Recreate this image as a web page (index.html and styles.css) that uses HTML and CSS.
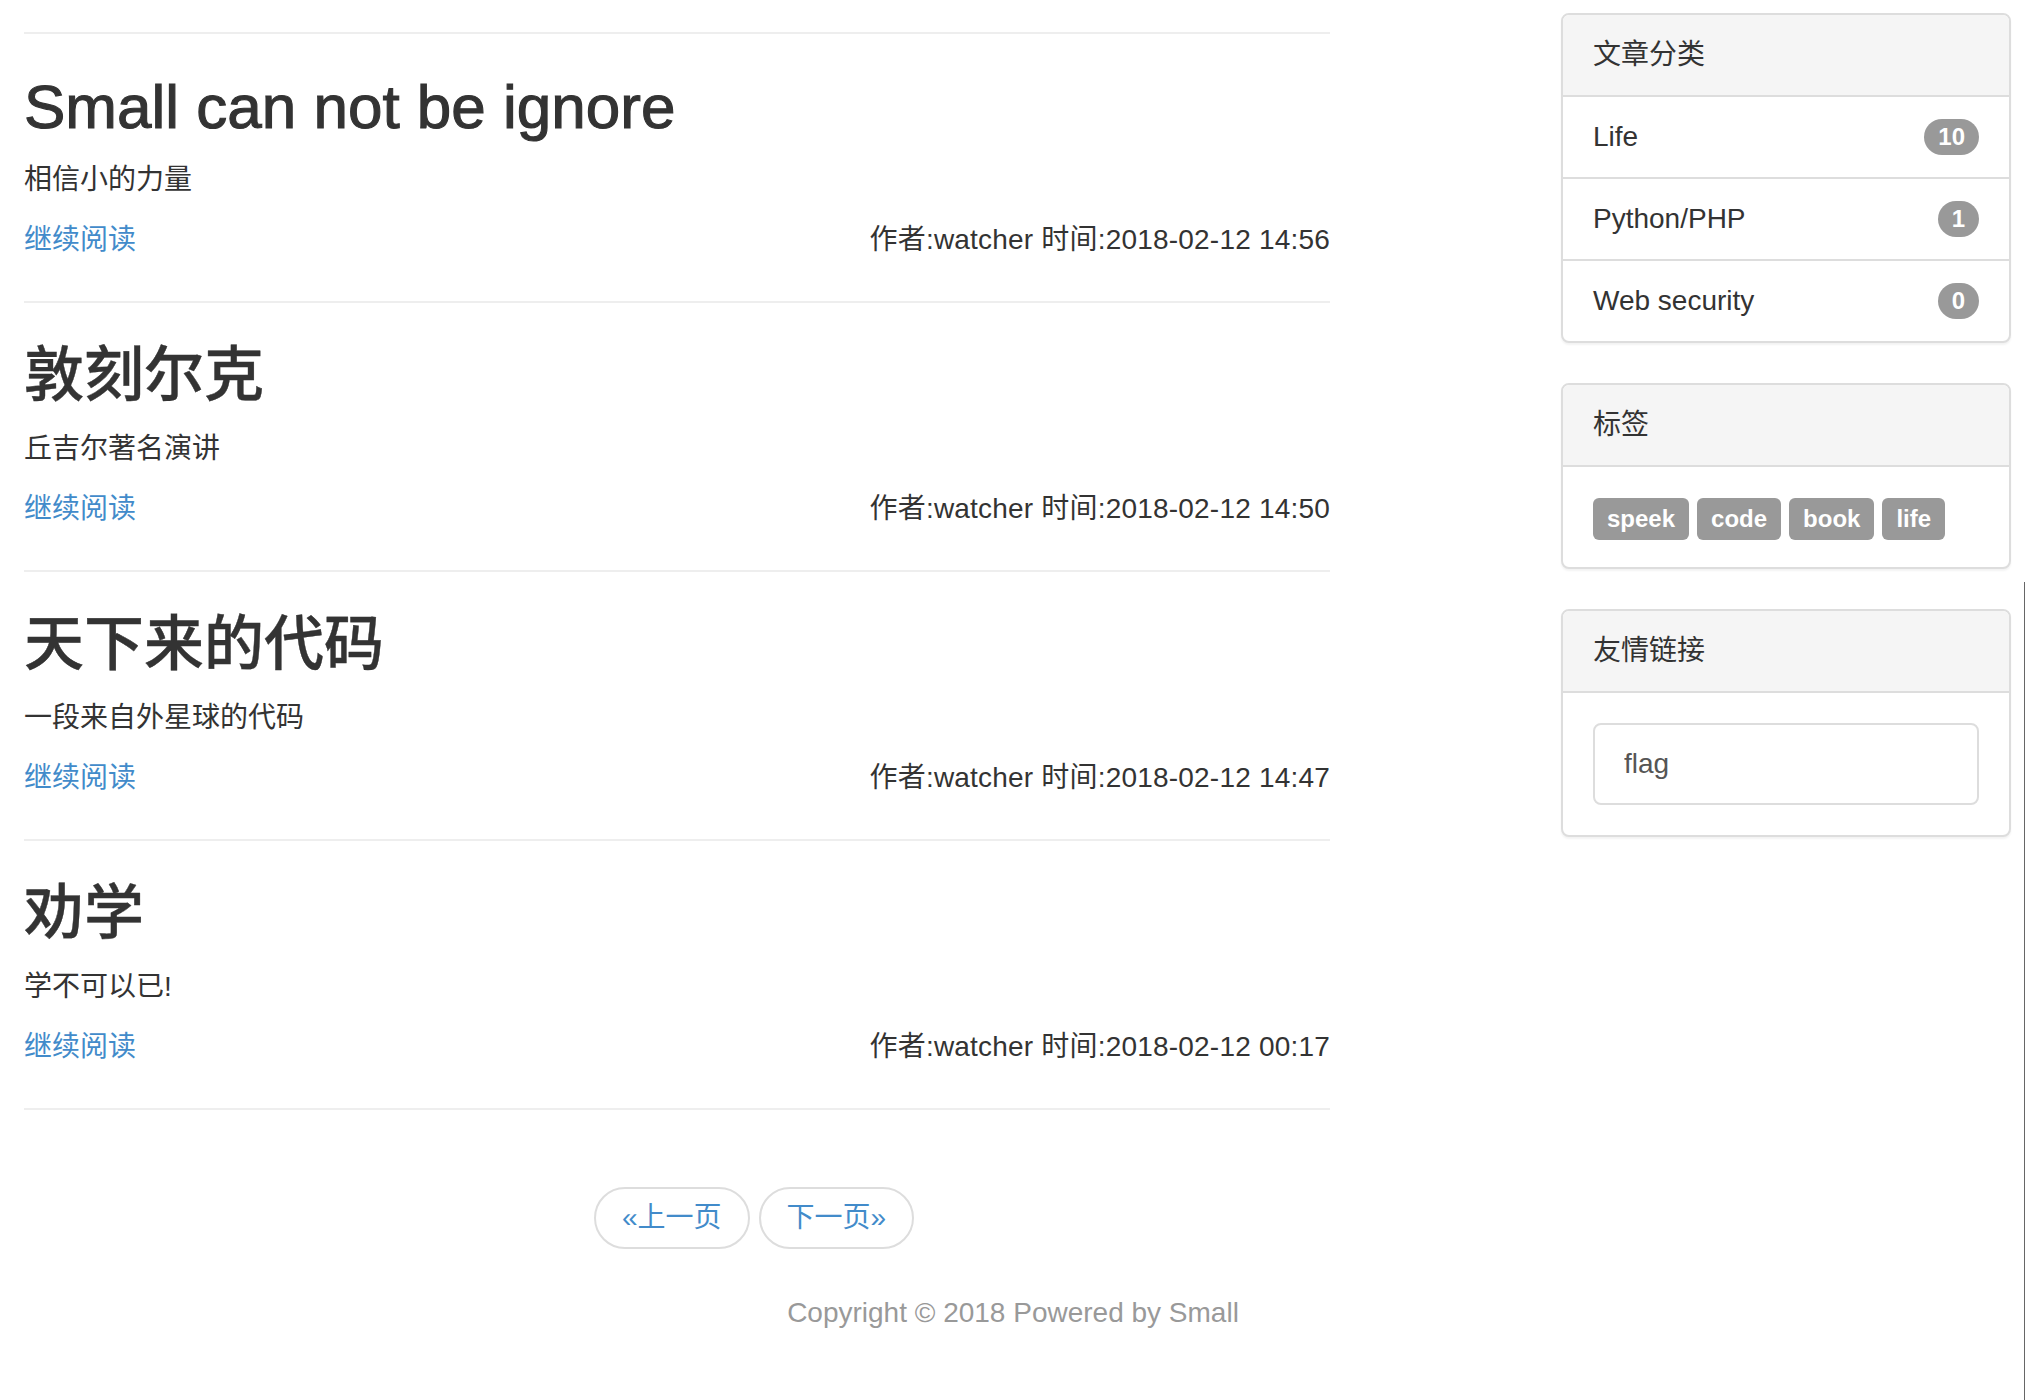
FILE: index.html
```html
<!DOCTYPE html>
<html lang="zh-CN">
<head>
<meta charset="utf-8">
<title>Small</title>
<link rel="stylesheet" href="styles.css">
</head>
<body>
<div class="layout">
  <main class="main">
    <hr class="divider">
    <article class="post">
      <h2 class="post-title post-title-en">Small can not be ignore</h2>
      <p class="post-desc">相信小的力量</p>
      <div class="post-meta"><a class="more" href="#">继续阅读</a><span class="info">作者:watcher 时间:2018-02-12 14:56</span></div>
    </article>
    <hr class="divider">
    <article class="post">
      <h2 class="post-title">敦刻尔克</h2>
      <p class="post-desc">丘吉尔著名演讲</p>
      <div class="post-meta"><a class="more" href="#">继续阅读</a><span class="info">作者:watcher 时间:2018-02-12 14:50</span></div>
    </article>
    <hr class="divider">
    <article class="post">
      <h2 class="post-title">天下来的代码</h2>
      <p class="post-desc">一段来自外星球的代码</p>
      <div class="post-meta"><a class="more" href="#">继续阅读</a><span class="info">作者:watcher 时间:2018-02-12 14:47</span></div>
    </article>
    <hr class="divider">
    <article class="post">
      <h2 class="post-title">劝学</h2>
      <p class="post-desc">学不可以已!</p>
      <div class="post-meta"><a class="more" href="#">继续阅读</a><span class="info">作者:watcher 时间:2018-02-12 00:17</span></div>
    </article>
    <hr class="divider">
    <nav class="pager">
      <a class="pager-btn" href="#">«上一页</a>
      <a class="pager-btn" href="#">下一页»</a>
    </nav>
  </main>
  <aside class="sidebar">
    <section class="panel">
      <div class="panel-heading">文章分类</div>
      <div class="list-item"><span>Life</span><span class="badge">10</span></div>
      <div class="list-item"><span>Python/PHP</span><span class="badge">1</span></div>
      <div class="list-item"><span>Web security</span><span class="badge">0</span></div>
    </section>
    <section class="panel">
      <div class="panel-heading">标签</div>
      <div class="panel-body tags">
        <span class="tag">speek</span>
        <span class="tag">code</span>
        <span class="tag">book</span>
        <span class="tag">life</span>
      </div>
    </section>
    <section class="panel">
      <div class="panel-heading">友情链接</div>
      <div class="panel-body links">
        <input class="link-input" type="text" value="flag" readonly>
      </div>
    </section>
  </aside>
</div>
<footer class="footer">Copyright © 2018 Powered by Small</footer>
<div class="scroll-edge"></div>
</body>
</html>
```

FILE: styles.css
```css
html, body {
  margin: 0;
  padding: 0;
  background: #fff;
}

body {
  font-family: "Liberation Sans", Arial, "Noto Sans CJK SC", sans-serif;
  font-size: 28px;
  line-height: 40px;
  color: #333;
}

.layout {
  display: flex;
  align-items: flex-start;
}

.main {
  margin-left: 24px;
  width: 1306px;
  padding-top: 32px;
}

.divider {
  border: 0;
  border-top: 2px solid #eee;
  height: 0;
  margin: 0;
}

.post {
  padding: 39px 0 41px;
}

.post-title {
  margin: 0 0 20px;
  font-size: 60px;
  line-height: 67px;
  font-weight: 500;
  color: #333;
  -webkit-text-stroke: 0.4px #333;
}

.post-title-en {
  font-size: 62px;
  -webkit-text-stroke: 1.1px #333;
}

.post-desc {
  margin: 0 0 20px;
}

.post-meta {
  display: flex;
  justify-content: space-between;
  height: 40px;
}

.more {
  color: #428bca;
  text-decoration: none;
}

.info {
  color: #333;
  letter-spacing: 0.2px;
}

.pager {
  display: flex;
  gap: 9px;
  margin-top: 77px;
  padding-left: 570px;
}

.pager-btn {
  display: flex;
  align-items: center;
  box-sizing: border-box;
  height: 62px;
  padding: 0 26px;
  border: 2px solid #ddd;
  border-radius: 31px;
  color: #428bca;
  text-decoration: none;
  background: #fff;
}

.sidebar {
  margin-left: 231px;
  margin-top: 13px;
  width: 450px;
}

.panel {
  border: 2px solid #ddd;
  border-radius: 8px;
  margin-bottom: 40px;
  background: #fff;
  box-shadow: 0 2px 2px rgba(0, 0, 0, 0.05);
}

.panel-heading {
  padding: 20px 30px;
  background: #f5f5f5;
  border-bottom: 2px solid #ddd;
  border-radius: 6px 6px 0 0;
  color: #333;
}

.list-item {
  display: flex;
  justify-content: space-between;
  align-items: center;
  padding: 20px 30px;
  height: 40px;
  border-top: 2px solid #ddd;
}

.panel-heading + .list-item {
  border-top: 0;
}

.badge {
  display: inline-block;
  padding: 6px 14px;
  font-size: 24px;
  line-height: 24px;
  font-weight: bold;
  color: #fff;
  background: #999;
  border-radius: 20px;
}

.panel-body {
  padding: 30px;
}

.tags {
  display: flex;
  gap: 8px;
  padding: 31px 30px 27px;
}

.tag {
  display: inline-block;
  height: 42px;
  line-height: 42px;
  padding: 0 14px;
  font-size: 24px;
  font-weight: bold;
  color: #fff;
  background: #999;
  border-radius: 6px;
}

.link-input {
  display: block;
  box-sizing: border-box;
  width: 100%;
  height: 82px;
  margin: 0;
  padding: 0 29px;
  border: 2px solid #ddd;
  border-radius: 8px;
  font-family: "Liberation Sans", Arial, sans-serif;
  font-size: 28px;
  color: #555;
  background: #fff;
  outline: none;
}

.footer {
  margin-top: 44px;
  text-align: center;
  color: #999;
}

.scroll-edge {
  position: absolute;
  left: 2024px;
  top: 582px;
  width: 1px;
  height: 818px;
  background: #666;
}
```
